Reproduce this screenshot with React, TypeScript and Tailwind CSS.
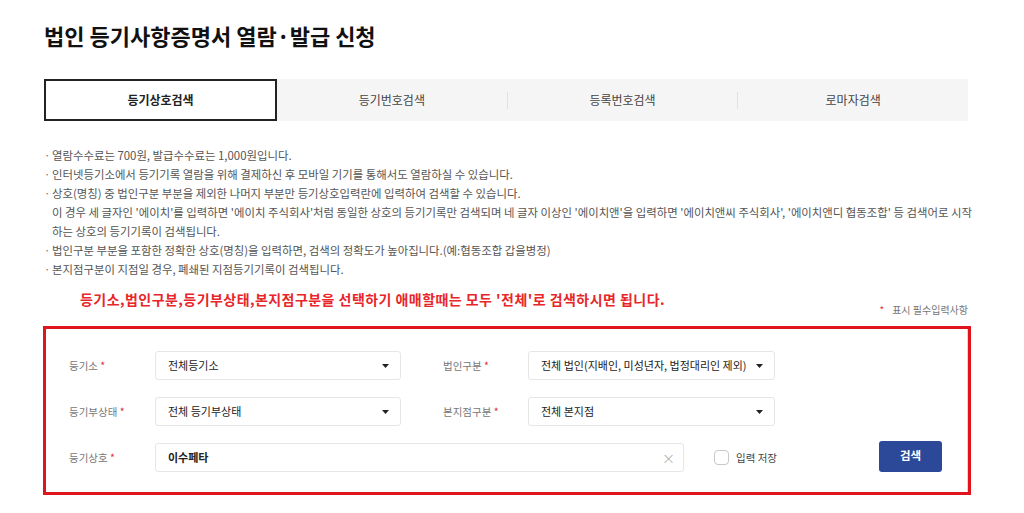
import React from "react";

const font = { fontFamily: '"Noto Sans CJK KR", "Noto Sans", sans-serif' };

function Caret() {
  return (
    <svg width="7" height="4" viewBox="0 0 7 4" className="shrink-0">
      <polygon points="0,0 7,0 3.5,4" fill="#222" />
    </svg>
  );
}

function Label({ text }: { text: string }) {
  return (
    <div className="w-[86px] shrink-0 text-[10.5px] text-[#777]">
      {text} <span className="text-[#e0323a]">*</span>
    </div>
  );
}

function Select({ value, w }: { value: string; w: string }) {
  return (
    <div
      className={`${w} h-[29px] shrink-0 flex items-center justify-between pl-[12px] pr-[11px] border border-[#e6e6e6] rounded-[3px] bg-white text-[11px] text-[#222]`}
    >
      <span>{value}</span>
      <Caret />
    </div>
  );
}

const notes: string[][] = [
  ["열람수수료는 700원, 발급수수료는 1,000원입니다."],
  ["인터넷등기소에서 등기기록 열람을 위해 결제하신 후 모바일 기기를 통해서도 열람하실 수 있습니다."],
  [
    "상호(명칭) 중 법인구분 부분을 제외한 나머지 부분만 등기상호입력란에 입력하여 검색할 수 있습니다.",
    "이 경우 세 글자인 '에이치'를 입력하면 '에이치 주식회사'처럼 동일한 상호의 등기기록만 검색되며 네 글자 이상인 '에이치앤'을 입력하면 '에이치앤씨 주식회사', '에이치앤디 협동조합' 등 검색어로 시작",
    "하는 상호의 등기기록이 검색됩니다.",
  ],
  ["법인구분 부분을 포함한 정확한 상호(명칭)을 입력하면, 검색의 정확도가 높아집니다.(예:협동조합 갑을병정)"],
  ["본지점구분이 지점일 경우, 폐쇄된 지점등기기록이 검색됩니다."],
];

export default function App() {
  return (
    <div className="w-[1024px] h-[513px] bg-white overflow-hidden" style={font}>
      <div className="pl-[44px] w-[968px]">
        <h1 className="pt-[19px] text-[22px] leading-[32px] font-bold text-[#111]">
          법인 등기사항증명서 열람·발급 신청
        </h1>

        {/* Tabs */}
        <div className="mt-[28px] h-[42px] flex bg-[#f5f5f5] text-[12px]">
          <div className="w-[233px] flex items-center justify-center border-2 border-[#222] bg-white font-bold text-[#222]">
            등기상호검색
          </div>
          <div className="flex-1 flex items-center justify-center text-[#444]">등기번호검색</div>
          <div className="w-px h-[17px] self-center bg-[#e2e2e2]" />
          <div className="flex-1 flex items-center justify-center text-[#444]">등록번호검색</div>
          <div className="w-px h-[17px] self-center bg-[#e2e2e2]" />
          <div className="flex-1 flex items-center justify-center text-[#444]">로마자검색</div>
        </div>

        {/* Notes */}
        <div className="mt-[25px] text-[11.4px] leading-[19px] text-[#555] whitespace-nowrap">
          {notes.map((lines, i) => (
            <div key={i} className="flex">
              <span className="w-[8px] shrink-0 text-[#777]">·</span>
              <div>
                {lines.map((l, j) => (
                  <div key={j}>{l}</div>
                ))}
              </div>
            </div>
          ))}
        </div>

        {/* Red notice */}
        <div className="mt-[10px] pl-[36px] text-[14px] leading-[20px] font-bold text-[#e8262a] tracking-[0.45px]">
          등기소,법인구분,등기부상태,본지점구분을 선택하기 애매할때는 모두 '전체'로 검색하시면 됩니다.
        </div>
        <div className="-mt-[7px] flex justify-end text-[10px] leading-[16px] text-[#777]">
          <span className="text-[#e0323a] mr-[8px]">*</span>표시 필수입력사항
        </div>

        {/* Form panel */}
        <div className="relative mt-[9px] h-[167px] border border-[#d9d9d9] pt-[23px] pl-[24px] flex flex-col gap-[17px]">
          <div className="flex items-center">
            <Label text="등기소" />
            <Select value="전체등기소" w="w-[246px]" />
            <div className="ml-[42px]">
              <Label text="법인구분" />
            </div>
            <div className="-ml-[1px]">
              <Select value="전체 법인(지배인, 미성년자, 법정대리인 제외)" w="w-[247px]" />
            </div>
          </div>
          <div className="flex items-center">
            <Label text="등기부상태" />
            <Select value="전체 등기부상태" w="w-[246px]" />
            <div className="ml-[42px]">
              <Label text="본지점구분" />
            </div>
            <div className="-ml-[1px]">
              <Select value="전체 본지점" w="w-[247px]" />
            </div>
          </div>
          <div className="flex items-center">
            <Label text="등기상호" />
            <div className="w-[529px] h-[29px] flex items-center justify-between pl-[12px] pr-[8px] border border-[#e6e6e6] rounded-[3px] text-[11px] font-bold text-[#222]">
              <span>이수페타</span>
              <span className="text-[13px] font-light text-[#999] leading-none">×</span>
            </div>
            <div className="ml-[30px] w-[15px] h-[15px] rounded-[4px] border border-[#c8c8c8] bg-white" />
            <span className="ml-[7px] text-[10.5px] text-[#444]">입력 저장</span>
            <div className="ml-[102px] -mt-[3px] w-[63px] h-[31px] rounded-[3px] bg-[#2c4898] flex items-center justify-center text-white text-[11.5px] font-bold">
              검색
            </div>
          </div>
          {/* red annotation box */}
          <div className="absolute -left-[2px] -top-[2px] -right-[4px] -bottom-[2px] border-[3px] border-[#e0141c] pointer-events-none" />
        </div>
      </div>
    </div>
  );
}
